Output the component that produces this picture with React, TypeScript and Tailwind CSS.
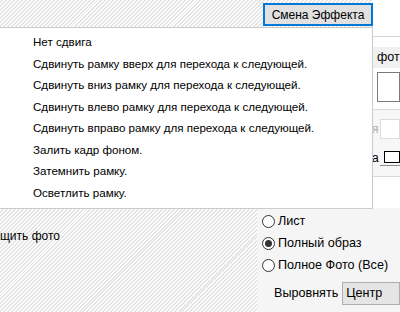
import React from 'react';

const effects = [
  'Нет сдвига',
  'Сдвинуть рамку вверх для перехода к следующей.',
  'Сдвинуть вниз рамку для перехода к следующей.',
  'Сдвинуть влево рамку для перехода к следующей.',
  'Сдвинуть вправо рамку для перехода к следующей.',
  'Залить кадр фоном.',
  'Затемнить рамку.',
  'Осветлить рамку.',
];

const fitModes = [
  { label: 'Лист', checked: false },
  { label: 'Полный образ', checked: true },
  { label: 'Полное Фото (Все)', checked: false },
];

const Radio: React.FC<{ label: string; checked: boolean }> = ({ label, checked }) => (
  <div className="flex items-center h-[22px]">
    <span className="shrink-0 w-[13px] h-[13px] rounded-full border border-[#333] bg-white flex items-center justify-center">
      {checked && <span className="w-[7px] h-[7px] rounded-full bg-[#333]" />}
    </span>
    <span className="ml-[3px] text-[12.6px] whitespace-nowrap">{label}</span>
  </div>
);

const App: React.FC = () => {
  return (
    <div
      className="relative w-[400px] h-[312px] overflow-hidden text-black bg-[repeating-linear-gradient(135deg,#ffffff_0px,#ffffff_1.4px,#e2e2e2_1.4px,#e2e2e2_2.8px)]"
      style={{ fontFamily: '"Liberation Sans", Arial, sans-serif' }}
    >
      {/* Top bar */}
      <div className="flex h-[27px]">
        <div className="flex-1" />
        <button className="mt-[3px] w-[110px] h-[23px] border-2 border-[#0078d7] bg-[#e1e1e1] text-[12px] leading-none">
          Смена Эффекта
        </button>
        <div className="w-[27px] bg-white" />
      </div>

      <div className="flex h-[285px]">
        {/* Left area */}
        <div className="w-[257px] shrink-0">
          <div className="pt-[200px] text-[12px] whitespace-nowrap">щить фото</div>
        </div>

        {/* Right panel */}
        <div className="flex-1 min-w-0 overflow-hidden bg-[#f5f5f5] flex flex-col">
          <div className="bg-white h-[181px] flex">
            <div className="w-[115px] shrink-0" />
            <div className="flex-1 min-w-0 flex flex-col">
              <div className="h-[10px] border-b border-[#d4d4d4]" />
              <div className="h-[10px]" />
              <div className="h-[21px] bg-[#f0f0f0] pl-[5px] text-[12.5px] leading-[21px] whitespace-nowrap">фот</div>
              <div className="h-[42px] pl-[5px] pt-[4px] border-b border-[#d9d9d9]">
                <div className="h-[30px] border border-[#7a7a7a] bg-white" />
              </div>
              <div className="h-[67px] border-b border-[#d9d9d9] bg-[#f7f7f7] pt-[9px]">
                <div className="flex items-center h-[20px]">
                  <span className="w-[5px] text-[12px] text-[#b0b0b0]">я</span>
                  <div className="ml-[3px] flex-1 h-[20px] border border-[#dcdcdc] bg-white" />
                </div>
                <div className="flex items-center h-[24px] mt-[7px]">
                  <span className="w-[5px] text-[12px]">а</span>
                  <div className="ml-[7px] flex-1 flex flex-col">
                    <div className="h-[12px] border border-black bg-white" />
                    <div className="mt-[2px] -ml-[4px] h-[1px] bg-[#8a8a8a]" />
                  </div>
                </div>
              </div>
            </div>
          </div>

          <div className="pl-[5px] pt-[2px]">
            {fitModes.map((m) => (
              <Radio key={m.label} label={m.label} checked={m.checked} />
            ))}
            <div className="flex items-center mt-[6px] pl-[12px]">
              <span className="text-[12.6px] whitespace-nowrap">Выровнять</span>
              <div className="ml-[4px] flex-1 h-[23px] border border-[#adadad] bg-[#e5e5e5] pl-[3px] text-[12.6px] leading-[21px]">
                Центр
              </div>
            </div>
          </div>
        </div>
      </div>

      {/* Effect dropdown menu */}
      <div className="absolute left-[-1px] top-[27px] w-[374px] h-[182px] bg-white border border-[#cccccc] pt-[3px]">
        {effects.map((e) => (
          <div key={e} className="h-[21.5px] flex items-center pl-[33px] text-[11.6px] whitespace-nowrap">
            {e}
          </div>
        ))}
      </div>
    </div>
  );
};

export default App;
